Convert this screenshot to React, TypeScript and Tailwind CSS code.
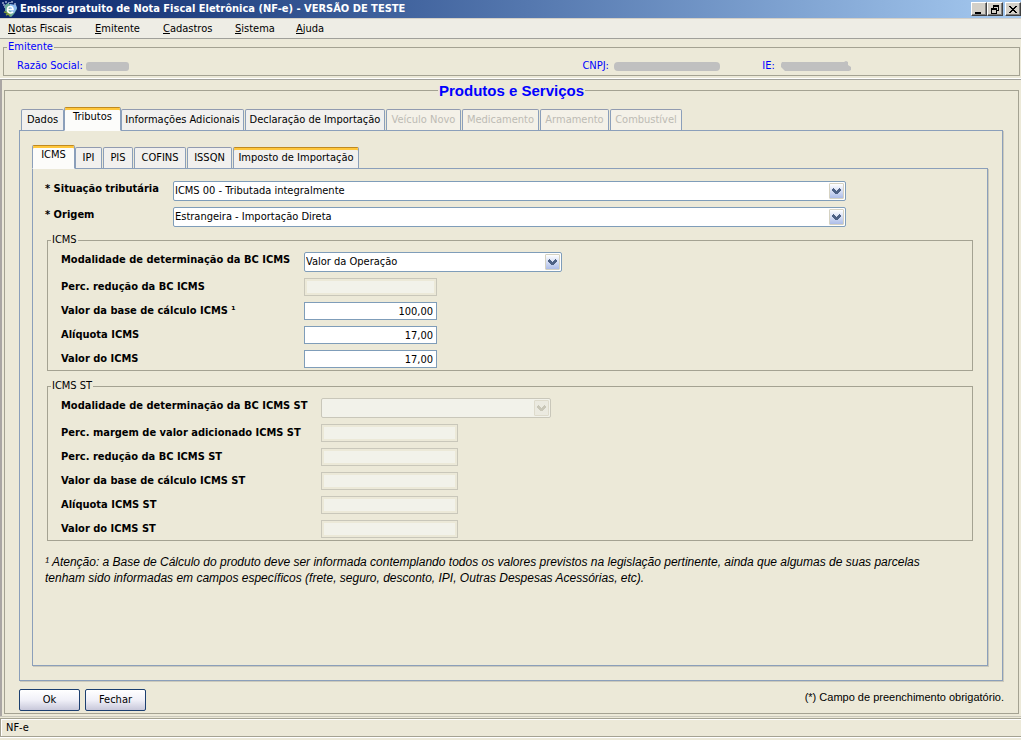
import { useId, type ReactNode } from "react";

type Tab = { label: string; width: string; active?: boolean; disabled?: boolean; marked?: boolean };

const mainTabs: Tab[] = [
  { label: "Dados", width: "w-[43px]" },
  { label: "Tributos", width: "w-[57px]", active: true },
  { label: "Informações Adicionais", width: "w-[123px]" },
  { label: "Declaração de Importação", width: "w-[140px]" },
  { label: "Veículo Novo", width: "w-[75px]", disabled: true },
  { label: "Medicamento", width: "w-[77px]", disabled: true },
  { label: "Armamento", width: "w-[69px]", disabled: true },
  { label: "Combustível", width: "w-[72px]", disabled: true },
];

const taxTabs: Tab[] = [
  { label: "ICMS", width: "w-[43px]", active: true },
  { label: "IPI", width: "w-[27px]" },
  { label: "PIS", width: "w-[30px]" },
  { label: "COFINS", width: "w-[52px]" },
  { label: "ISSQN", width: "w-[45px]" },
  { label: "Imposto de Importação", width: "w-[126px]", marked: true },
];

function TabBar({ tabs, className = "" }: { tabs: Tab[]; className?: string }) {
  return (
    <div role="tablist" className={`relative z-10 -mb-px flex h-6 items-end ${className}`}>
      {tabs.map((t, i) => {
        const state = t.active
          ? "h-6 border-t-[#c08a20] bg-[#fcfcfa] pb-1 shadow-[inset_0_2px_0_#ffc73c] border-b-[#fcfcfa]"
          : t.marked
            ? "h-[22px] border-t-[#c08a20] border-b-[#8b9fba] bg-[#f1f0ee] shadow-[inset_0_2px_0_#ffc73c]"
            : t.disabled
              ? "h-[22px] border-t-[#919bb0] border-b-[#8b9fba] bg-[#f4f1e8] text-[#bdbbb4]"
              : "h-[22px] border-t-[#919bb0] border-b-[#8b9fba] bg-[#f1f0ee]";
        const gap = i > 1 && !tabs[i - 1].active ? "ml-px" : "";
        return (
          <button
            key={t.label}
            type="button"
            role="tab"
            aria-selected={!!t.active}
            disabled={t.disabled}
            className={`flex shrink-0 items-center justify-center rounded-t-[2px] border border-x-[#8b9fba] whitespace-nowrap ${t.width} ${gap} ${state}`}
          >
            {t.label}
          </button>
        );
      })}
    </div>
  );
}

function Chevron({ disabled }: { disabled?: boolean }) {
  return (
    <span
      className={`pointer-events-none absolute top-[2px] right-[2px] flex h-4 w-[15px] items-center justify-center rounded-[1px] border ${
        disabled ? "border-[#dedbcc] bg-[#ebeae0]" : "border-[#d5d2c2] bg-linear-to-b from-white to-[#adbde8]"
      }`}
    >
      <svg width="9" height="6" viewBox="0 0 9 6" shapeRendering="crispEdges" fill={disabled ? "#c9c7b8" : "#4d6185"}>
        <path d="M1 0h1v1h1v1h1v1h1v-1h1v-1h1v-1h1v1h1v2h-1v1h-1v1h-1v1h-3v-1h-1v-1h-1v-1h-1v-2h1z" />
      </svg>
    </span>
  );
}

function SelectRow({ label, value, width, disabled }: { label: string; value: string; width: string; disabled?: boolean }) {
  const id = useId();
  return (
    <>
      <label htmlFor={id} className="leading-4 font-bold whitespace-nowrap">
        {label}
      </label>
      <div className={`relative h-5 ${width}`}>
        <select
          id={id}
          disabled={disabled}
          className={`block h-5 w-full appearance-none rounded-[2px] border pl-px opacity-100 ${
            disabled ? "border-[#c9c7ba] bg-[#f2f2ea]" : "border-[#7f9db9] bg-white"
          }`}
        >
          <option>{value}</option>
        </select>
        <Chevron disabled={disabled} />
      </div>
    </>
  );
}

function InputRow({ label, value = "", width, disabled }: { label: string; value?: string; width: string; disabled?: boolean }) {
  const id = useId();
  return (
    <>
      <label htmlFor={id} className="leading-[18px] font-bold whitespace-nowrap">
        {label}
      </label>
      <input
        id={id}
        defaultValue={value}
        disabled={disabled}
        className={`h-[18px] border pr-[3px] text-right ${width} ${
          disabled ? "border-[#c9c7ba] bg-[#f2f2ea] shadow-[inset_0_0_0_2px_#ece9d8]" : "border-[#7f9db9] bg-white"
        }`}
      />
    </>
  );
}

function Group({ title, columns, className = "", children }: { title: string; columns: string; className?: string; children: ReactNode }) {
  return (
    <fieldset className={`mr-[2px] ml-[2px] border border-[#a4a292] pb-[2px] pl-[13px] ${className}`}>
      <legend className="-ml-[10px] px-px leading-4">{title}</legend>
      <div className={`mt-1 grid gap-y-[6px] ${columns}`}>{children}</div>
    </fieldset>
  );
}

function AppIcon() {
  return (
    <svg width="16" height="16" viewBox="0 0 16 16" aria-hidden="true">
      <path d="M3 4l3-2 3 2 5 1 1 3-3 5-3 3-2-1v-2L3 10z" fill="#6fae9c" />
      <path d="M8 3l6 1 1 3-3 5-4-2z" fill="#8fbcf0" />
      <path d="M2 11l4 1 2 3M4 14l2-1" stroke="#7f9c3c" strokeWidth="1.5" fill="none" />
      <path d="M5 8.500h6c0-4-5.500-4-5.500 0s3.500 4 5.500 2.500" stroke="#fff" strokeWidth="1.600" fill="none" />
      <path d="M0 2h2M1 4h2M3 1h2M6 2h1M9 1h2M12 3h2M2 6h1M8 1v1" stroke="#e8f0ff" strokeWidth="1" />
    </svg>
  );
}

function WinButton({ label, className = "", children }: { label: string; className?: string; children: ReactNode }) {
  return (
    <button
      type="button"
      aria-label={label}
      className={`flex h-[14px] w-4 items-center justify-center border border-t-white border-r-[#404040] border-b-[#404040] border-l-white bg-[#d4d0c8] shadow-[inset_-1px_-1px_0_#808080] ${className}`}
    >
      <svg width="12" height="11" viewBox="0 0 12 11" shapeRendering="crispEdges" aria-hidden="true">
        {children}
      </svg>
    </button>
  );
}

const menus = [
  { label: "Notas Fiscais", width: "w-[87px]" },
  { label: "Emitente", width: "w-[68px]" },
  { label: "Cadastros", width: "w-[72px]" },
  { label: "Sistema", width: "w-[61px]" },
  { label: "Ajuda", width: "w-[60px]" },
];

export default function App() {
  return (
    <div className="flex min-h-screen flex-col bg-[#ece9d8] font-['DejaVu_Sans_Condensed','DejaVu_Sans',sans-serif] text-[11px] leading-[14px] text-black">
      <header className="flex h-[19px] items-center border-b border-[#d4d0c8] bg-linear-to-r from-[#0a246a] to-[#a6caf0] pl-[2px] text-white">
        <AppIcon />
        <h1 className="ml-[2px] flex-1 font-bold whitespace-nowrap">Emissor gratuito de Nota Fiscal Eletrônica (NF-e) - VERSÃO DE TESTE</h1>
        <WinButton label="Minimizar">
          <path d="M2 8h6v2H2z" />
        </WinButton>
        <WinButton label="Restaurar">
          <path d="M4 1h6v6H8V6h1V3H5v1H4zM2 4h6v6H2zM3 6v3h4V6z" fillRule="evenodd" />
        </WinButton>
        <WinButton label="Fechar janela" className="ml-[2px]">
          <path d="M2 2h2v1h1v1h2V3h1V2h2v1H9v1H8v1H7v1h1v1h1v1h1v1H8V8H7V7H5v1H4v1H2V8h1V7h1V6h1V5H4V4H3V3H2z" />
        </WinButton>
      </header>

      <nav className="flex h-5 items-center border-b border-[#a0a09a] bg-[#eeede5] pl-2">
        {menus.map((m) => (
          <button key={m.label} type="button" className={`text-left whitespace-nowrap ${m.width}`}>
            <span className="underline underline-offset-1">{m.label[0]}</span>
            {m.label.slice(1)}
          </button>
        ))}
      </nav>

      <section className="border-b border-white pr-px pb-[2px] pl-[3px] text-[#0000ff]">
        <fieldset className="border border-[#a4a292] pb-[2px] pl-[13px]">
          <legend className="-ml-[10px] px-px leading-4">Emitente</legend>
          <div className="grid grid-cols-[566fr_180fr_257fr] pt-1 whitespace-nowrap">
            <span className="flex items-center gap-[3px]">
              Razão Social:
              <span className="h-[9px] w-[43px] rounded-[3px] bg-[#c0c0c0]" />
            </span>
            <span className="flex items-center gap-[5px]">
              CNPJ:
              <span className="h-[9px] w-[106px] rounded-[4px] bg-[#c0c0c0]" />
            </span>
            <span className="flex items-center gap-[5px]">
              IE:
              <svg width="72" height="12" viewBox="0 0 72 12" aria-hidden="true">
                <path d="M2 2h62l2-1 2 1v3l3 2v3l-2 1H5l-4-4V4z" fill="#c0c0c0" />
              </svg>
            </span>
          </div>
        </fieldset>
      </section>

      <main className="flex flex-1 flex-col border-t border-l-2 border-t-[#a0a09a] border-l-[#aaa6a4] px-[2px] pt-[10px] pb-[2px]">
        <section className="flex flex-1 flex-col border border-[#a4a292] px-[14px] pb-[2px]">
          <h2 className="-mt-2 self-center bg-[#ece9d8] px-px font-['Liberation_Sans',Arial,sans-serif] text-[15px] leading-4 font-bold text-[#0000ff]">
            Produtos e Serviços
          </h2>

          <TabBar tabs={mainTabs} className="mt-2 pl-[2px]" />
          <div className="mr-px flex flex-1 flex-col border border-[#8b9fba] px-3 py-[14px] shadow-[1px_1px_0_#cbc9bc]">
            <TabBar tabs={taxTabs} />
            <div className="mr-[2px] flex-1 border border-[#8b9fba] px-3 pt-3 pb-4 shadow-[1px_1px_0_#cbc9bc]">
              <div className="grid grid-cols-[128px_1fr] gap-y-[6px]">
                <SelectRow label="* Situação tributária" value="ICMS 00 - Tributada integralmente" width="w-[673px]" />
                <SelectRow label="* Origem" value="Estrangeira - Importação Direta" width="w-[673px]" />
              </div>

              <Group title="ICMS" columns="grid-cols-[243px_1fr]" className="mt-[5px]">
                <SelectRow label="Modalidade de determinação da BC ICMS" value="Valor da Operação" width="w-[258px]" />
                <InputRow label="Perc. redução da BC ICMS" width="w-[133px]" disabled />
                <InputRow label="Valor da base de cálculo ICMS ¹" value="100,00" width="w-[133px]" />
                <InputRow label="Alíquota ICMS" value="17,00" width="w-[133px]" />
                <InputRow label="Valor do ICMS" value="17,00" width="w-[133px]" />
              </Group>

              <Group title="ICMS ST" columns="grid-cols-[260px_1fr]" className="mt-[7px]">
                <SelectRow label="Modalidade de determinação da BC ICMS ST" value="" width="w-[230px]" disabled />
                <InputRow label="Perc. margem de valor adicionado ICMS ST" width="w-[137px]" disabled />
                <InputRow label="Perc. redução da BC ICMS ST" width="w-[137px]" disabled />
                <InputRow label="Valor da base de cálculo ICMS ST" width="w-[137px]" disabled />
                <InputRow label="Alíquota ICMS ST" width="w-[137px]" disabled />
                <InputRow label="Valor do ICMS ST" width="w-[137px]" disabled />
              </Group>

              <p className="mt-[13px] pr-7 font-['Liberation_Sans',Arial,sans-serif] text-xs leading-4 italic">
                ¹ Atenção: a Base de Cálculo do produto deve ser informada contemplando todos os valores previstos na legislação pertinente, ainda que
                algumas de suas parcelas tenham sido informadas em campos específicos (frete, seguro, desconto, IPI, Outras Despesas Acessórias, etc).
              </p>
            </div>
          </div>

          <div className="mt-2 flex items-start gap-[5px]">
            <button
              type="button"
              className="h-[22px] w-[61px] rounded-[2px] border border-[#1c3f70] bg-linear-to-b from-white via-[#f0f0f8] to-[#c8c8da]"
            >
              Ok
            </button>
            <button
              type="button"
              className="h-[22px] w-[61px] rounded-[2px] border border-[#1c3f70] bg-linear-to-b from-white via-[#f0f0f8] to-[#c8c8da]"
            >
              Fechar
            </button>
            <p className="ml-auto font-['Liberation_Sans',Arial,sans-serif] text-[11px] leading-4">(*) Campo de preenchimento obrigatório.</p>
          </div>
        </section>
      </main>

      <footer className="border-t border-[#cbc9bc]">
        <div className="mt-px flex h-[19px] items-center border-y border-l border-[#a4a292] pl-[5px] shadow-[inset_1px_1px_0_#fff,0_1px_0_#fff]">NF-e</div>
        <div className="h-[3px]" />
      </footer>
    </div>
  );
}
